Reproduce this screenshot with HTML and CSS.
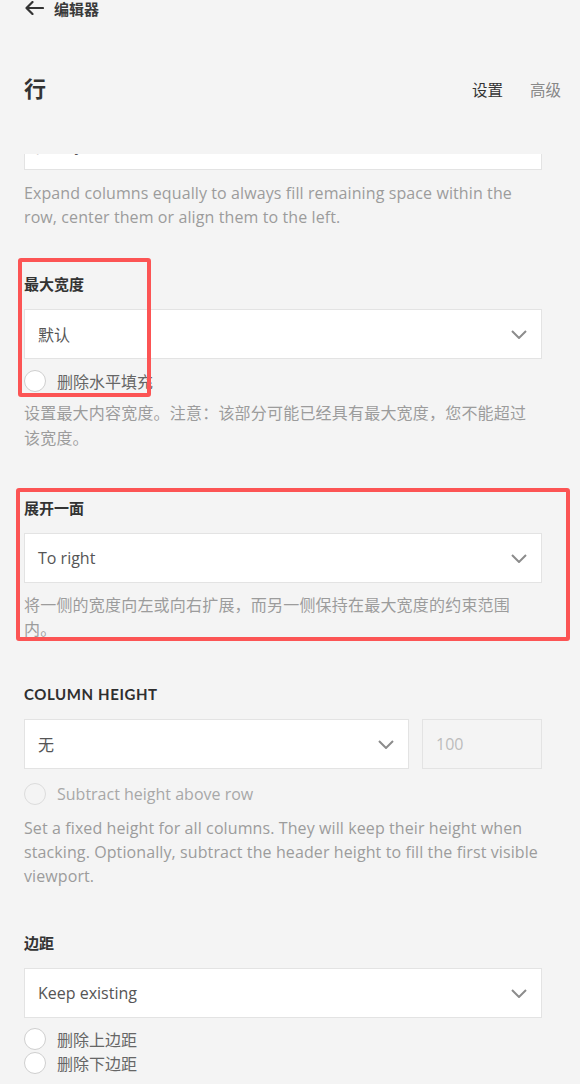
FILE: index.html
```html
<!DOCTYPE html>
<html lang="zh">

<head>
    <meta charset="UTF-8">
    <meta name="viewport" content="width=device-width, initial-scale=1.0">
    <title>行 - 编辑器</title>
    <link rel="stylesheet" href="styles.css">
</head>

<body>

    <div class="topbar">
        <svg class="back-icon" width="20" height="14" viewBox="0 0 20 14">
            <path d="M19 7H2.5M8.5 1L2.5 7l6 6" fill="none" stroke="#333" stroke-width="2.2" stroke-linecap="round" stroke-linejoin="round"/>
        </svg>
        <span class="topbar-title">编辑器</span>
    </div>

    <div class="titlebar">
        <h1 class="page-title">行</h1>
        <div class="tabs">
            <a class="tab active" href="#settings">设置</a>
            <a class="tab" href="#advanced">高级</a>
        </div>
    </div>

    <div class="panel">

        <!-- scrolled up, only the bottom edge is showing -->
        <div class="clip">
            <div class="select">
                <span class="select-value">Justify</span>
                <svg class="chevron" width="16" height="9" viewBox="0 0 16 9"><polyline points="1,1 8,8 15,1"/></svg>
            </div>
        </div>
        <p class="desc first-desc">Expand columns equally to always fill remaining space within the row, center them or align them to the left.</p>

        <div class="field">
            <div class="mark mark-width"></div>
            <label class="field-label">最大宽度</label>
            <div class="select">
                <span class="select-value">默认</span>
                <svg class="chevron" width="16" height="9" viewBox="0 0 16 9"><polyline points="1,1 8,8 15,1"/></svg>
            </div>
            <div class="checks">
                <div class="check"><span class="circle"></span>删除水平填充</div>
            </div>
            <p class="desc zh">设置最大内容宽度。注意：该部分可能已经具有最大宽度，您不能超过该宽度。</p>
        </div>

        <div class="field expand-field">
            <div class="mark mark-expand"></div>
            <label class="field-label">展开一面</label>
            <div class="select">
                <span class="select-value">To right</span>
                <svg class="chevron" width="16" height="9" viewBox="0 0 16 9"><polyline points="1,1 8,8 15,1"/></svg>
            </div>
            <p class="desc zh tight">将一侧的宽度向左或向右扩展，而另一侧保持在最大宽度的约束范围内。</p>
        </div>

        <div class="field height-field">
            <label class="field-label caps">Column height</label>
            <div class="select-row">
                <div class="select">
                    <span class="select-value">无</span>
                    <svg class="chevron" width="16" height="9" viewBox="0 0 16 9"><polyline points="1,1 8,8 15,1"/></svg>
                </div>
                <div class="number-input">100</div>
            </div>
            <div class="checks">
                <div class="check disabled"><span class="circle"></span>Subtract height above row</div>
            </div>
            <p class="desc">Set a fixed height for all columns. They will keep their height when stacking. Optionally, subtract the header height to fill the first visible viewport.</p>
        </div>

        <div class="field">
            <label class="field-label">边距</label>
            <div class="select">
                <span class="select-value">Keep existing</span>
                <svg class="chevron" width="16" height="9" viewBox="0 0 16 9"><polyline points="1,1 8,8 15,1"/></svg>
            </div>
            <div class="checks stacked">
                <div class="check"><span class="circle"></span>删除上边距</div>
                <div class="check"><span class="circle"></span>删除下边距</div>
            </div>
        </div>

    </div>

</body>

</html>
```

FILE: styles.css
```css
body {
    margin: 0;
    background-color: #f4f4f4;
    font-family: "Open Sans", "Noto Sans CJK SC", sans-serif;
    color: #333;
}

.topbar {
    display: flex;
    align-items: center;
    gap: 10px;
    height: 16px;
    padding: 0 24px;
}

.topbar-title {
    font-size: 15px;
    font-weight: 700;
    color: #3a3a3a;
}

.titlebar {
    display: flex;
    align-items: center;
    justify-content: space-between;
    height: 24px;
    margin-top: 60px;
    padding: 0 19px 0 24px;
}

.page-title {
    margin: 0;
    font-size: 22px;
    font-weight: 700;
    line-height: 24px;
    color: #333;
}

.tabs {
    display: flex;
    gap: 27px;
    padding-top: 3px;
}

.tab {
    font-size: 15.5px;
    color: #888;
    text-decoration: none;
}

.tab.active {
    color: #333;
}

.panel {
    width: 518px;
    padding-left: 24px;
}

.clip {
    height: 16px;
    margin-top: 54px;
    overflow: hidden;
    display: flex;
    align-items: flex-end;
}

.clip .select {
    flex: 0 0 auto;
    width: 100%;
}

.select {
    box-sizing: border-box;
    height: 50px;
    display: flex;
    align-items: center;
    justify-content: space-between;
    padding: 0 14px 0 13px;
    background-color: #fff;
    border: 1px solid #e3e3e3;
}

.select-value {
    font-size: 16px;
    color: #555;
}

.chevron polyline {
    fill: none;
    stroke: #8c8c8c;
    stroke-width: 2;
}

.desc {
    margin: 0;
    font-size: 16px;
    letter-spacing: 0.1px;
    line-height: 24px;
    color: #9c9c9c;
}

.desc.zh {
    letter-spacing: 0.2px;
    line-height: 25px;
    margin-top: 8px;
}

.desc.zh.tight {
    line-height: 24px;
    margin-top: 10px;
}

.first-desc {
    margin-top: 11px;
}

.field {
    position: relative;
    margin-top: 45px;
}

.expand-field {
    margin-top: 47px;
}

.height-field {
    margin-top: 43px;
}

.field-label {
    display: block;
    height: 20px;
    margin-bottom: 15px;
    font-size: 15px;
    font-weight: 700;
    line-height: 20px;
    color: #333;
}

.field-label.caps {
    font-family: Lato, sans-serif;
    text-transform: uppercase;
    letter-spacing: 0.6px;
    font-size: 15px;
    color: #2f2f2f;
}

.select-row {
    display: flex;
    gap: 13px;
}

.select-row .select {
    flex: 1;
}

.number-input {
    box-sizing: border-box;
    width: 120px;
    height: 50px;
    display: flex;
    align-items: center;
    padding-left: 13px;
    border: 1px solid #e3e3e3;
    font-size: 16px;
    color: #bcbcbc;
}

.checks {
    margin-top: 10px;
}

.height-field .checks {
    margin-top: 13px;
}

.height-field .desc {
    margin-top: 10px;
}

.checks.stacked {
    margin-top: 9px;
}

.check {
    display: flex;
    align-items: center;
    gap: 11px;
    height: 24px;
    font-size: 16px;
    color: #666;
}

.circle {
    box-sizing: border-box;
    width: 22px;
    height: 22px;
    border-radius: 50%;
    border: 1px solid #cfcfcf;
    background-color: #fff;
}

.check.disabled {
    color: #a8a8a8;
}

.check.disabled .circle {
    background-color: #f4f4f4;
    border-color: #dcdcdc;
}

/* red annotation frames */
.mark {
    position: absolute;
    box-sizing: border-box;
    border: 4px solid #fc5454;
    border-radius: 3px;
    pointer-events: none;
}

.mark-width {
    top: -16px;
    left: -6px;
    width: 133px;
    height: 139px;
}

.mark-expand {
    top: -10px;
    left: -8px;
    width: 554px;
    height: 153px;
}
```
